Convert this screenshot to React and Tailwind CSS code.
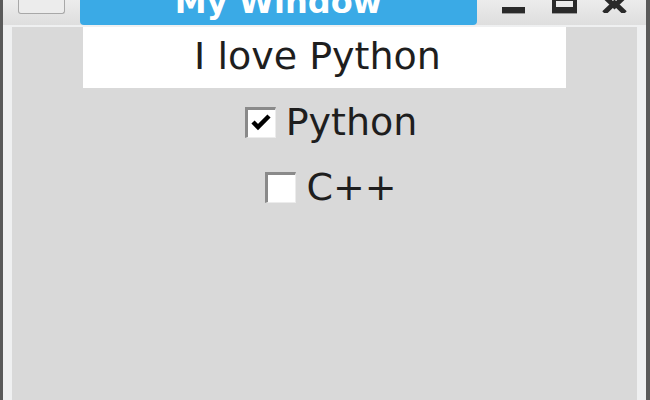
import React from 'react';

function CheckRow({ label, checked }) {
  return (
    <div className="flex items-center gap-[10px]">
      <div className="relative h-[31px] w-[31px] border-t-[3px] border-l-[3px] border-r border-b border-t-[#8a8a8a] border-l-[#8a8a8a] border-r-[#ececec] border-b-[#ececec] bg-white">
        {checked && (
          <svg className="absolute left-[3px] top-[4px]" width="21" height="17" viewBox="0 0 21 17">
            <path d="M2 8 L7 13 L18 2" fill="none" stroke="#000" strokeWidth="4.5" strokeLinejoin="miter" />
          </svg>
        )}
      </div>
      <span className="text-[38px] leading-none text-[#1e1e1e]">{label}</span>
    </div>
  );
}

function App() {
  return (
    <div
      className="flex h-[400px] w-[650px] flex-col overflow-hidden border-l-[3px] border-r-[4px] border-[#5a5a5a] bg-[#eff0f1]"
      style={{ fontFamily: '"DejaVu Sans", sans-serif' }}
    >
      {/* title bar */}
      <div className="flex h-[25px] shrink-0 items-start bg-gradient-to-b from-[#ececec] to-[#dedede]">
        <div className="ml-[15px] h-[14px] w-[47px] rounded-b-[3px] border border-t-0 border-[#a8a8a8] bg-[#ececec]" />
        <div className="ml-[15px] flex h-[25px] w-[397px] items-end justify-center overflow-hidden rounded-b-[4px] bg-[#3aaae6]">
          <span className="mb-[7px] text-[32px] font-bold leading-none text-white">My Window</span>
        </div>
        <div className="ml-[25px] mt-[7px] h-[6px] w-[23px] bg-[#2a2a2a] shadow-[0_1px_0_#9a9a9a]" />
        <div className="ml-[27px] mt-[-3px] h-[16px] w-[25px] border-[4px] border-b-[6px] border-[#2a2a2a] shadow-[0_1px_0_#9a9a9a]" />
        <svg className="ml-[25px] mt-[-4px]" width="25" height="17" viewBox="0 0 25 17">
          <path d="M2 0 L12.5 10 L23 0 M2 17 L12.5 7 L23 17" fill="none" stroke="#2a2a2a" strokeWidth="5" />
        </svg>
      </div>

      {/* body */}
      <div className="flex flex-1 px-[9px] pt-[2px]">
        <div className="flex flex-1 flex-col items-center bg-[#d9d9d9]">
          <div className="flex h-[61px] w-[483px] items-center justify-center bg-white pb-[3px] pr-[14px]">
            <span className="text-[38px] leading-none text-[#1e1e1e]">I love Python</span>
          </div>
          <div className="mt-[15px] flex flex-col items-center gap-[27px] pl-[13px]">
            <CheckRow label="Python" checked />
            <CheckRow label="C++" />
          </div>
        </div>
      </div>
    </div>
  );
}

export default App;
